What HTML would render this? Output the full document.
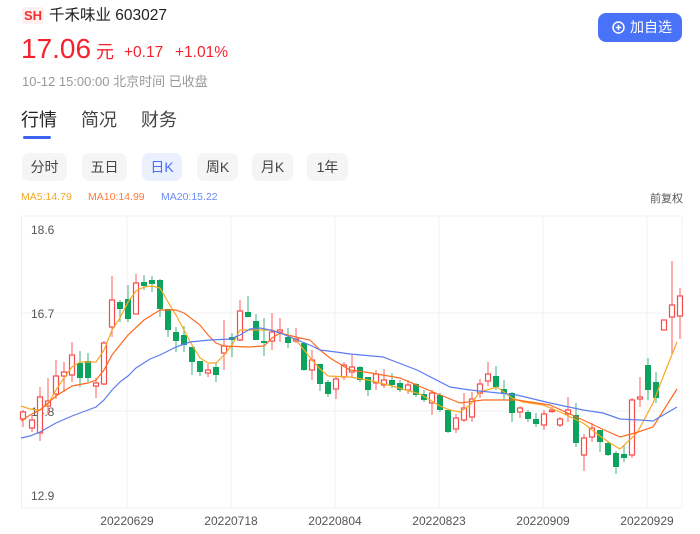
<!DOCTYPE html>
<html><head><meta charset="utf-8"><style>
*{margin:0;padding:0;box-sizing:border-box}
body{width:700px;height:534px;background:#fff;font-family:"Liberation Sans","Noto Sans CJK SC",sans-serif;position:relative;overflow:hidden;color:#222}
.a{position:absolute;white-space:nowrap}
.btn{position:absolute;top:153px;height:28px;background:#f5f5f5;border-radius:7px;font-size:14px;color:#444;text-align:center;line-height:28px}
</style></head><body>
<div class="a" style="left:22px;top:7px;width:22px;height:17px;background:#fff0f0;border-radius:3px;color:#f23030;font-size:13px;font-weight:bold;line-height:17px;text-align:center">SH</div>
<div class="a" style="left:49px;top:5px;font-size:15.5px;color:#222;line-height:22px">千禾味业 603027</div>
<div class="a" style="left:21px;top:33px;font-size:28px;color:#f5222d;line-height:32px">17.06</div>
<div class="a" style="left:96px;top:41px;font-size:18px;color:#f5222d;line-height:22px">元</div>
<div class="a" style="left:124px;top:43px;font-size:15.5px;color:#f5222d;line-height:20px">+0.17</div>
<div class="a" style="left:175px;top:43px;font-size:15.5px;color:#f5222d;line-height:20px">+1.01%</div>
<div class="a" style="left:22px;top:73px;font-size:13px;color:#999;line-height:18px">10-12 15:00:00 北京时间 已收盘</div>
<div class="a" style="left:21px;top:108px;font-size:18px;color:#222;line-height:24px">行情</div>
<div class="a" style="left:81px;top:108px;font-size:18px;color:#444;line-height:24px">简况</div>
<div class="a" style="left:141px;top:108px;font-size:18px;color:#444;line-height:24px">财务</div>
<div class="a" style="left:23px;top:136px;width:28px;height:3px;background:#3d63f2;border-radius:2px"></div>
<div class="btn" style="left:22px;width:45px">分时</div>
<div class="btn" style="left:82px;width:45px">五日</div>
<div class="btn" style="left:142px;width:40px;background:#ebf0ff;color:#4a6cf7">日K</div>
<div class="btn" style="left:197px;width:41px">周K</div>
<div class="btn" style="left:252px;width:41px">月K</div>
<div class="btn" style="left:307px;width:41px">1年</div>
<div class="a" style="left:21px;top:191px;font-size:10.5px;color:#f5a623">MA5:14.79</div>
<div class="a" style="left:88px;top:191px;font-size:10.5px;color:#ff7a3d">MA10:14.99</div>
<div class="a" style="left:161px;top:191px;font-size:10.5px;color:#6a8af5">MA20:15.22</div>
<div class="a" style="left:650px;top:190px;font-size:11px;color:#555">前复权</div>
<div class="a" style="left:598px;top:13px;width:84px;height:29px;background:#4872f7;border-radius:8px;color:#fff;font-size:14px;line-height:29px">
<svg style="position:absolute;left:14px;top:8px" width="13" height="13" viewBox="0 0 13 13"><circle cx="6.5" cy="6.5" r="5.5" fill="none" stroke="#fff" stroke-width="1.5"/><path d="M6.5 3.8v5.4M3.8 6.5h5.4" stroke="#fff" stroke-width="1.5"/></svg>
<span style="position:absolute;left:32px">加自选</span></div>
<svg id="c" class="a" style="left:0;top:0" width="700" height="534"></svg>
<script>
var s='';
s+='<line x1="21" y1="216" x2="682" y2="216" stroke="#f0f0f0"/>';
[313,411,508].forEach(function(y){s+='<line x1="21" y1="'+y+'" x2="682" y2="'+y+'" stroke="#f0f0f0"/>'});
s+='<line x1="21.5" y1="216" x2="21.5" y2="508" stroke="#eee"/><line x1="682" y1="216" x2="682" y2="508" stroke="#f3f3f3"/>';
[127,231,335,439,543,647].forEach(function(x){s+='<line x1="'+x+'" y1="216" x2="'+x+'" y2="508" stroke="#f0f0f0"/>'});
var L=[['18.6',234],['16.7',318],['14.8',416],['12.9',500]];
L.forEach(function(l){s+='<text x="31" y="'+l[1]+'" font-size="12" fill="#555" font-family="Liberation Sans">'+l[0]+'</text>'});
var D=[['20220629',127],['20220718',231],['20220804',335],['20220823',439],['20220909',543],['20220929',647]];
D.forEach(function(d){s+='<text x="'+d[1]+'" y="525" font-size="12" fill="#555" text-anchor="middle" font-family="Liberation Sans">'+d[0]+'</text>'});
var C=[[23,'r',412,419,410,427],[32,'r',420,428,415,432],[40,'r',397,433,387,441],[48,'r',401,406,378,415],[56,'r',376,394,360,399],[64,'r',372,376,362,392],[72,'r',355,375,342,382],[80,'g',363,378,351,387],[88,'g',361,378,353,382],[96,'r',383,386,378,398],[104,'r',343,384,341,385],[112,'r',300,327,276,337],[120,'g',302,309,300,322],[128,'g',299,319,285,322],[136,'r',283,314,274,314],[144,'g',282,286,275,290],[152,'g',280,284,276,292],[160,'g',280,309,279,317],[168,'g',309,330,309,337],[176,'g',332,341,327,352],[184,'g',335,345,326,352],[192,'g',347,362,347,375],[200,'g',361,372,361,376],[208,'r',370,373,364,377],[216,'g',367,375,363,382],[224,'r',346,353,320,370],[232,'g',337,340,333,357],[240,'r',311,340,300,341],[248,'g',312,317,296,317],[256,'g',321,340,314,340],[264,'g',341,343,318,356],[272,'r',332,341,313,350],[280,'r',330,332,318,342],[288,'g',337,343,328,348],[296,'r',339,341,328,343],[304,'g',343,370,342,371],[312,'r',360,370,350,380],[320,'g',364,384,364,391],[328,'g',382,394,380,397],[336,'r',379,389,376,399],[344,'r',365,377,362,380],[352,'r',367,372,355,378],[360,'g',367,380,366,382],[368,'g',377,390,377,396],[376,'r',374,383,370,390],[384,'r',380,385,369,388],[392,'g',380,385,373,388],[400,'g',383,390,380,392],[408,'r',385,390,380,394],[416,'g',384,395,383,397],[424,'g',394,400,390,402],[432,'r',393,403,390,415],[440,'g',395,410,393,412],[448,'g',410,432,409,433],[456,'r',418,429,414,433],[464,'r',408,420,393,422],[472,'r',399,417,392,422],[480,'r',384,393,379,398],[488,'r',374,381,362,386],[496,'g',376,387,366,390],[504,'g',389,394,380,400],[512,'g',393,413,392,422],[520,'r',408,412,406,418],[528,'g',412,419,410,422],[536,'g',419,424,413,427],[544,'r',414,425,410,430],[552,'r',410,411,407,413],[560,'r',419,425,417,427],[568,'r',410,414,397,422],[576,'g',415,443,403,447],[584,'r',438,455,434,471],[592,'r',428,437,423,442],[600,'g',430,442,430,452],[608,'g',443,455,441,456],[616,'g',453,467,451,474],[624,'g',454,458,445,462],[632,'r',400,455,398,458],[640,'r',397,399,377,407],[648,'g',365,390,358,400],[656,'g',382,398,372,403],[664,'r',320,330,320,330],[672,'r',305,317,261,354],[680,'r',296,316,288,339]];
C.forEach(function(c){var x=c[0],col=c[1]=='r'?'#f54b4b':'#0ca35e';
s+='<line x1="'+x+'" y1="'+c[4]+'" x2="'+x+'" y2="'+c[5]+'" stroke="'+(c[1]=='r'?'#f77':'#5fbf8f')+'" stroke-width="1.2"/>';
var h=Math.max(c[3]-c[2],1.5);
if(c[1]=='r')s+='<rect x="'+(x-2.5)+'" y="'+c[2]+'" width="5" height="'+h+'" fill="#fff" stroke="'+col+'" stroke-width="1.2"/>';
else s+='<rect x="'+(x-3)+'" y="'+c[2]+'" width="6" height="'+h+'" fill="'+col+'"/>';});
function pl(p,c){s+='<polyline fill="none" stroke="'+c+'" stroke-width="1.2" points="'+p+'"/>'}
pl('21,406 30,409 40,410 48,404 56,390 64,378 72,367 80,362 96,362 104,350 112,330 120,318 128,302 136,291 144,287 152,286 160,288 168,302 176,315 184,330 192,345 200,358 208,363 216,363 224,355 232,345 240,330 256,330 272,330 288,336 296,340 304,350 312,360 320,369 328,376 350,377 368,380 392,386 420,394 440,406 450,410 460,412 470,405 480,392 497,387 512,398 523,402 543,405 560,412 583,423 600,436 610,443 620,449 637,433 653,403 665,372 677,342','#f7a823');
pl('21,421 30,415 40,410 56,396 72,386 88,383 96,380 104,370 112,355 128,335 144,320 160,310 176,310 184,313 200,325 208,335 216,343 224,346 248,347 264,346 272,338 280,333 300,338 310,340 320,350 330,358 350,370 365,372 400,378 433,392 460,403 483,400 517,400 550,405 583,420 600,428 620,437 635,433 653,427 665,408 677,389','#ff6a1f');
pl('21,438 30,436 40,432 56,423 72,416 88,410 96,407 104,400 112,390 120,382 128,376 136,368 150,359 160,355 176,347 190,342 210,340 230,339 240,335 250,329 260,328 270,330 280,333 300,341 312,346 320,350 336,352 350,354 383,357 417,370 450,387 470,390 517,395 550,403 583,410 603,413 620,419 640,420 653,421 665,414 677,407','#5b7cf0');
document.getElementById('c').innerHTML=s;
</script>
</body></html>
